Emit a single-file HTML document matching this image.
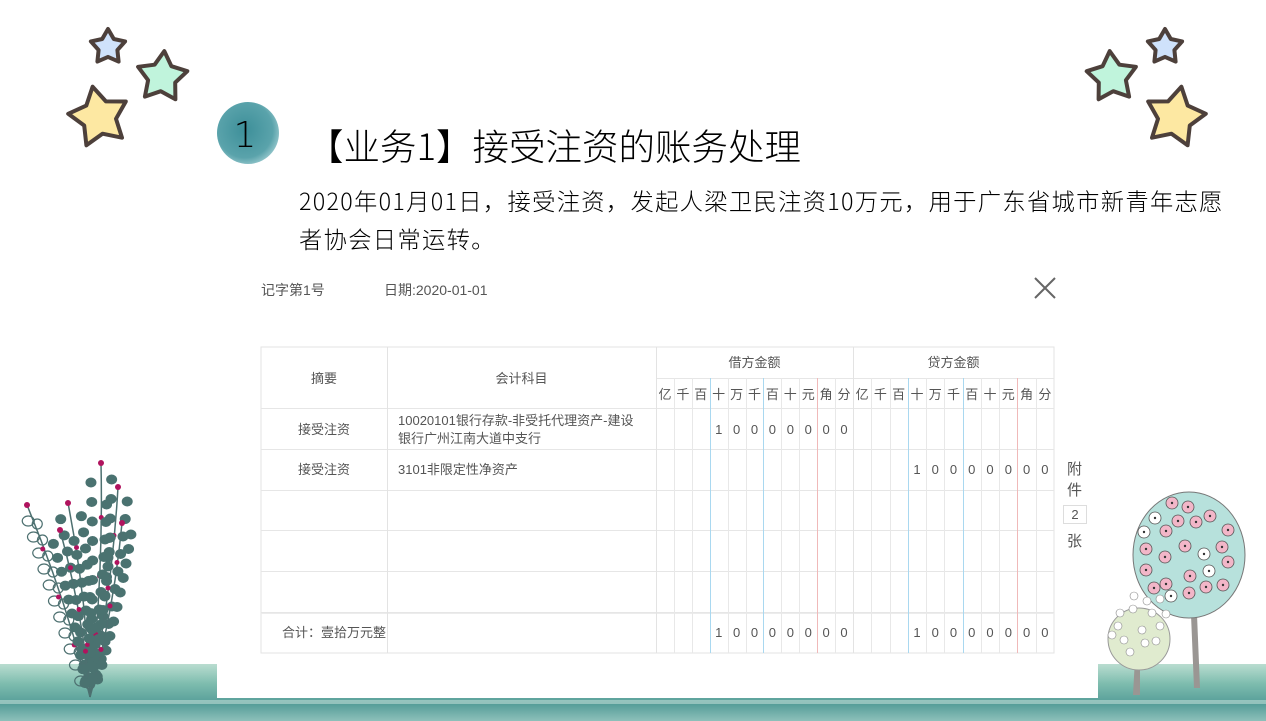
<!DOCTYPE html>
<html><head><meta charset="utf-8"><style>
body{margin:0;width:1266px;height:721px;overflow:hidden;background:#fff;position:relative;font-family:"Liberation Sans","Noto Sans CJK SC",sans-serif}
.abs{position:absolute}
</style></head><body>
<svg class="abs" style="left:0;top:0" width="1266" height="721" id="bg">
<defs>
<linearGradient id="wc" x1="0" y1="0" x2="0" y2="1">
<stop offset="0" stop-color="#b9ddd0"/><stop offset="0.35" stop-color="#7dbcae"/><stop offset="0.7" stop-color="#559d98"/><stop offset="1" stop-color="#8dc0ba"/></linearGradient>
<radialGradient id="bd" cx="0.45" cy="0.45" r="0.6"><stop offset="0" stop-color="#3d8f99"/><stop offset="0.75" stop-color="#5aa3ab"/><stop offset="1" stop-color="#9ccbd0"/></radialGradient>
</defs>
<rect x="0" y="664" width="1266" height="57" fill="url(#wc)"/>
<rect x="0" y="700" width="1266" height="4" fill="#cfe6e0" opacity="0.5"/>
<rect x="217" y="600" width="881" height="98" fill="#fff"/>
<g id="stars" stroke="#4d403b" stroke-width="4" stroke-linejoin="round"></g>
<circle cx="248" cy="133" r="31" fill="url(#bd)"/>
<text x="245" y="147" font-size="36" text-anchor="middle" fill="#000" font-family="DejaVu Sans" font-weight="200">1</text>
<g id="plant"></g>
<path d="M1190 590 L1194 688 L1200 688 L1196 590Z" fill="#9a9693"/>
<ellipse cx="1189" cy="555" rx="56" ry="63" fill="#b7e1dc" stroke="#777" stroke-width="1"/>
<g id="tree1"></g>
<path d="M1136 640 L1133 695 L1140 695 L1140 640Z" fill="#9a9693"/>
<circle cx="1139" cy="639" r="31" fill="#e0ebcf" stroke="#999" stroke-width="1"/>
<g id="tree2"></g>
</svg>

<div class="abs" style="left:307px;top:118px;font-size:36.5px;font-family:'Noto Sans CJK SC',sans-serif;font-weight:300;color:#000;white-space:nowrap">【业务1】接受注资的账务处理</div>
<div class="abs" style="left:299px;top:181px;width:960px;font-size:23.3px;letter-spacing:1.3px;line-height:38px;font-family:'Noto Sans CJK SC',sans-serif;font-weight:300;color:#000;white-space:nowrap">2020年01月01日，接受注资，发起人梁卫民注资10万元，用于广东省城市新青年志愿<br>者协会日常运转。</div>
<div class="abs" style="left:261px;top:280px;font-size:14px;color:#555">记字第1号</div>
<div class="abs" style="left:384px;top:280px;font-size:14px;color:#555">日期:2020-01-01</div>
<svg class="abs" style="left:1034px;top:277px" width="22" height="22"><path d="M1 1L21 21M21 1L1 21" stroke="#666" stroke-width="2"/></svg>

<svg class="abs" style="left:0;top:0" width="1266" height="721" id="tbl" font-family="Liberation Sans, Noto Sans CJK SC, sans-serif" font-size="13" fill="#555"></svg>

<div class="abs" style="left:1067px;top:459px;font-size:15px;color:#555;line-height:21px">附<br>件</div>
<div class="abs" style="left:1063px;top:505px;width:22px;height:17px;border:1px solid #ddd;font-size:13px;color:#555;text-align:center;line-height:17px">2</div>
<div class="abs" style="left:1067px;top:530px;font-size:15px;color:#555">张</div>

<script>
const NS="http://www.w3.org/2000/svg";
function el(p,t,a,txt){const e=document.createElementNS(NS,t);for(const k in a)e.setAttribute(k,a[k]);if(txt!==undefined)e.textContent=txt;p.appendChild(e);return e;}
const st=document.getElementById('stars');
function star(cx,cy,r,fill,rot){let pts=[];for(let i=0;i<10;i++){const rr=i%2?r*0.55:r;const a=(rot+i*36-90)*Math.PI/180;pts.push((cx+rr*Math.cos(a)).toFixed(1)+","+(cy+rr*Math.sin(a)).toFixed(1));}el(st,'polygon',{points:pts.join(' '),fill:fill});}
star(108,47,18,'#cfe2fb',0);star(162,77,26,'#c0f4dc',5);star(99,117,31,'#fde8a2',-12);
star(1165,47,18,'#cfe2fb',0);star(1112,77,26,'#c0f4dc',-5);star(1175,117,31,'#fde8a2',12);
const pl=document.getElementById('plant');
const stems=[[90,697,101,463],[90,697,68,503],[90,697,118,487],[90,697,122,523],[90,697,27,505],[90,697,60,530]];
stems.forEach((s,si)=>{el(pl,'path',{d:`M${s[0]} ${s[1]} Q${(s[0]+s[2])/2+8} ${(s[1]+s[3])/2} ${s[2]} ${s[3]}`,stroke:'#4d7070','stroke-width':1.5,fill:'none'});
 const n=12;for(let i=1;i<n;i++){const t=i/n;const x=s[0]+(s[2]-s[0])*t+(si!=4?8*t*(1-t)*2:0);const y=s[1]+(s[3]-s[1])*t;
  if(si==4){el(pl,'ellipse',{cx:x-4,cy:y,rx:6,ry:5,fill:'none',stroke:'#4d7070','stroke-width':1.2});el(pl,'ellipse',{cx:x+5,cy:y+3,rx:5,ry:5,fill:'none',stroke:'#4d7070','stroke-width':1.2});}
  else{const sp=3+8*t;el(pl,'ellipse',{cx:x-sp,cy:y,rx:5.5,ry:5,fill:'#4a7270'});el(pl,'ellipse',{cx:x+sp,cy:y-3,rx:5.5,ry:5,fill:'#4a7270'});}
  if(i%3==0)el(pl,'circle',{cx:x,cy:y-4,r:2.5,fill:'#b0135e'});}
 el(pl,'circle',{cx:s[2],cy:s[3],r:3,fill:'#b0135e'});});
const t1=document.getElementById('tree1');
[[1172,503],[1188,507],[1155,518],[1178,521],[1196,522],[1210,516],[1228,530],[1144,532],[1166,531],[1185,546],[1146,549],[1165,557],[1204,554],[1222,547],[1228,562],[1146,570],[1190,576],[1209,571],[1166,584],[1206,587],[1223,585],[1154,588],[1171,596],[1189,593]].forEach((p,i)=>{const w=(i%5==2);el(t1,'circle',{cx:p[0],cy:p[1],r:6,fill:w?'#fff':'#f2b6c8',stroke:'#555','stroke-width':0.8});el(t1,'circle',{cx:p[0],cy:p[1],r:1.2,fill:'#333'});});
const t2=document.getElementById('tree2');
[[1134,596],[1147,601],[1160,599],[1120,613],[1133,609],[1152,613],[1166,614],[1118,626],[1142,630],[1160,626],[1112,635],[1124,640],[1145,643],[1156,641],[1130,652]].forEach(p=>el(t2,'circle',{cx:p[0],cy:p[1],r:4,fill:'#fff',stroke:'#888','stroke-width':0.6}));
const tb=document.getElementById('tbl');
const L=261,R=1054,T=347,B=653,c1=387,c2=656,mid=853;
el(tb,'rect',{x:L,y:T,width:R-L,height:B-T,fill:'#fff',stroke:'#e3e3e3'});
const rows=[408,449,490,530,571,612];
rows.forEach(y=>el(tb,'line',{x1:L,y1:y+.5,x2:R,y2:y+.5,stroke:'#e6e6e6'}));
el(tb,'line',{x1:L,y1:613.5,x2:R,y2:613.5,stroke:'#ececec'});
el(tb,'line',{x1:c2,y1:378.5,x2:R,y2:378.5,stroke:'#e6e6e6'});
[c1,c2,mid].forEach(x=>el(tb,'line',{x1:x+.5,y1:T,x2:x+.5,y2:B,stroke:'#e3e3e3'}));
const units="亿千百十万千百十元角分";
function cols(x0,x1){const a=[];for(let i=0;i<=11;i++)a.push(x0+(x1-x0)*i/11);return a;}
const dc=cols(c2,mid),cc=cols(mid,R);
[dc,cc].forEach(c=>{for(let i=1;i<11;i++){const col=(i==3||i==6)?'#a9d8f0':(i==9?'#f0b9b9':'#e8e8e8');el(tb,'line',{x1:c[i].toFixed(0)+'.5',y1:378,x2:c[i].toFixed(0)+'.5',y2:B,stroke:col});}
 for(let i=0;i<11;i++)el(tb,'text',{x:(c[i]+c[i+1])/2,y:399,'text-anchor':'middle'},units[i]);});
el(tb,'text',{x:(c2+mid)/2,y:367,'text-anchor':'middle'},'借方金额');
el(tb,'text',{x:(mid+R)/2,y:367,'text-anchor':'middle'},'贷方金额');
el(tb,'text',{x:(L+c1)/2,y:383,'text-anchor':'middle'},'摘要');
el(tb,'text',{x:(c1+c2)/2,y:383,'text-anchor':'middle'},'会计科目');
el(tb,'text',{x:(L+c1)/2,y:434,'text-anchor':'middle'},'接受注资');
el(tb,'text',{x:398,y:425},'10020101银行存款-非受托代理资产-建设');
el(tb,'text',{x:398,y:443},'银行广州江南大道中支行');
el(tb,'text',{x:(L+c1)/2,y:474,'text-anchor':'middle'},'接受注资');
el(tb,'text',{x:398,y:474},'3101非限定性净资产');
el(tb,'text',{x:282,y:637},'合计：壹拾万元整');
function digits(c,y){const d="10000000";for(let i=0;i<8;i++)el(tb,'text',{x:(c[i+3]+c[i+4])/2,y:y,'text-anchor':'middle'},d[i]);}
digits(dc,434);digits(cc,474);digits(dc,637);digits(cc,637);
</script>
</body></html>
